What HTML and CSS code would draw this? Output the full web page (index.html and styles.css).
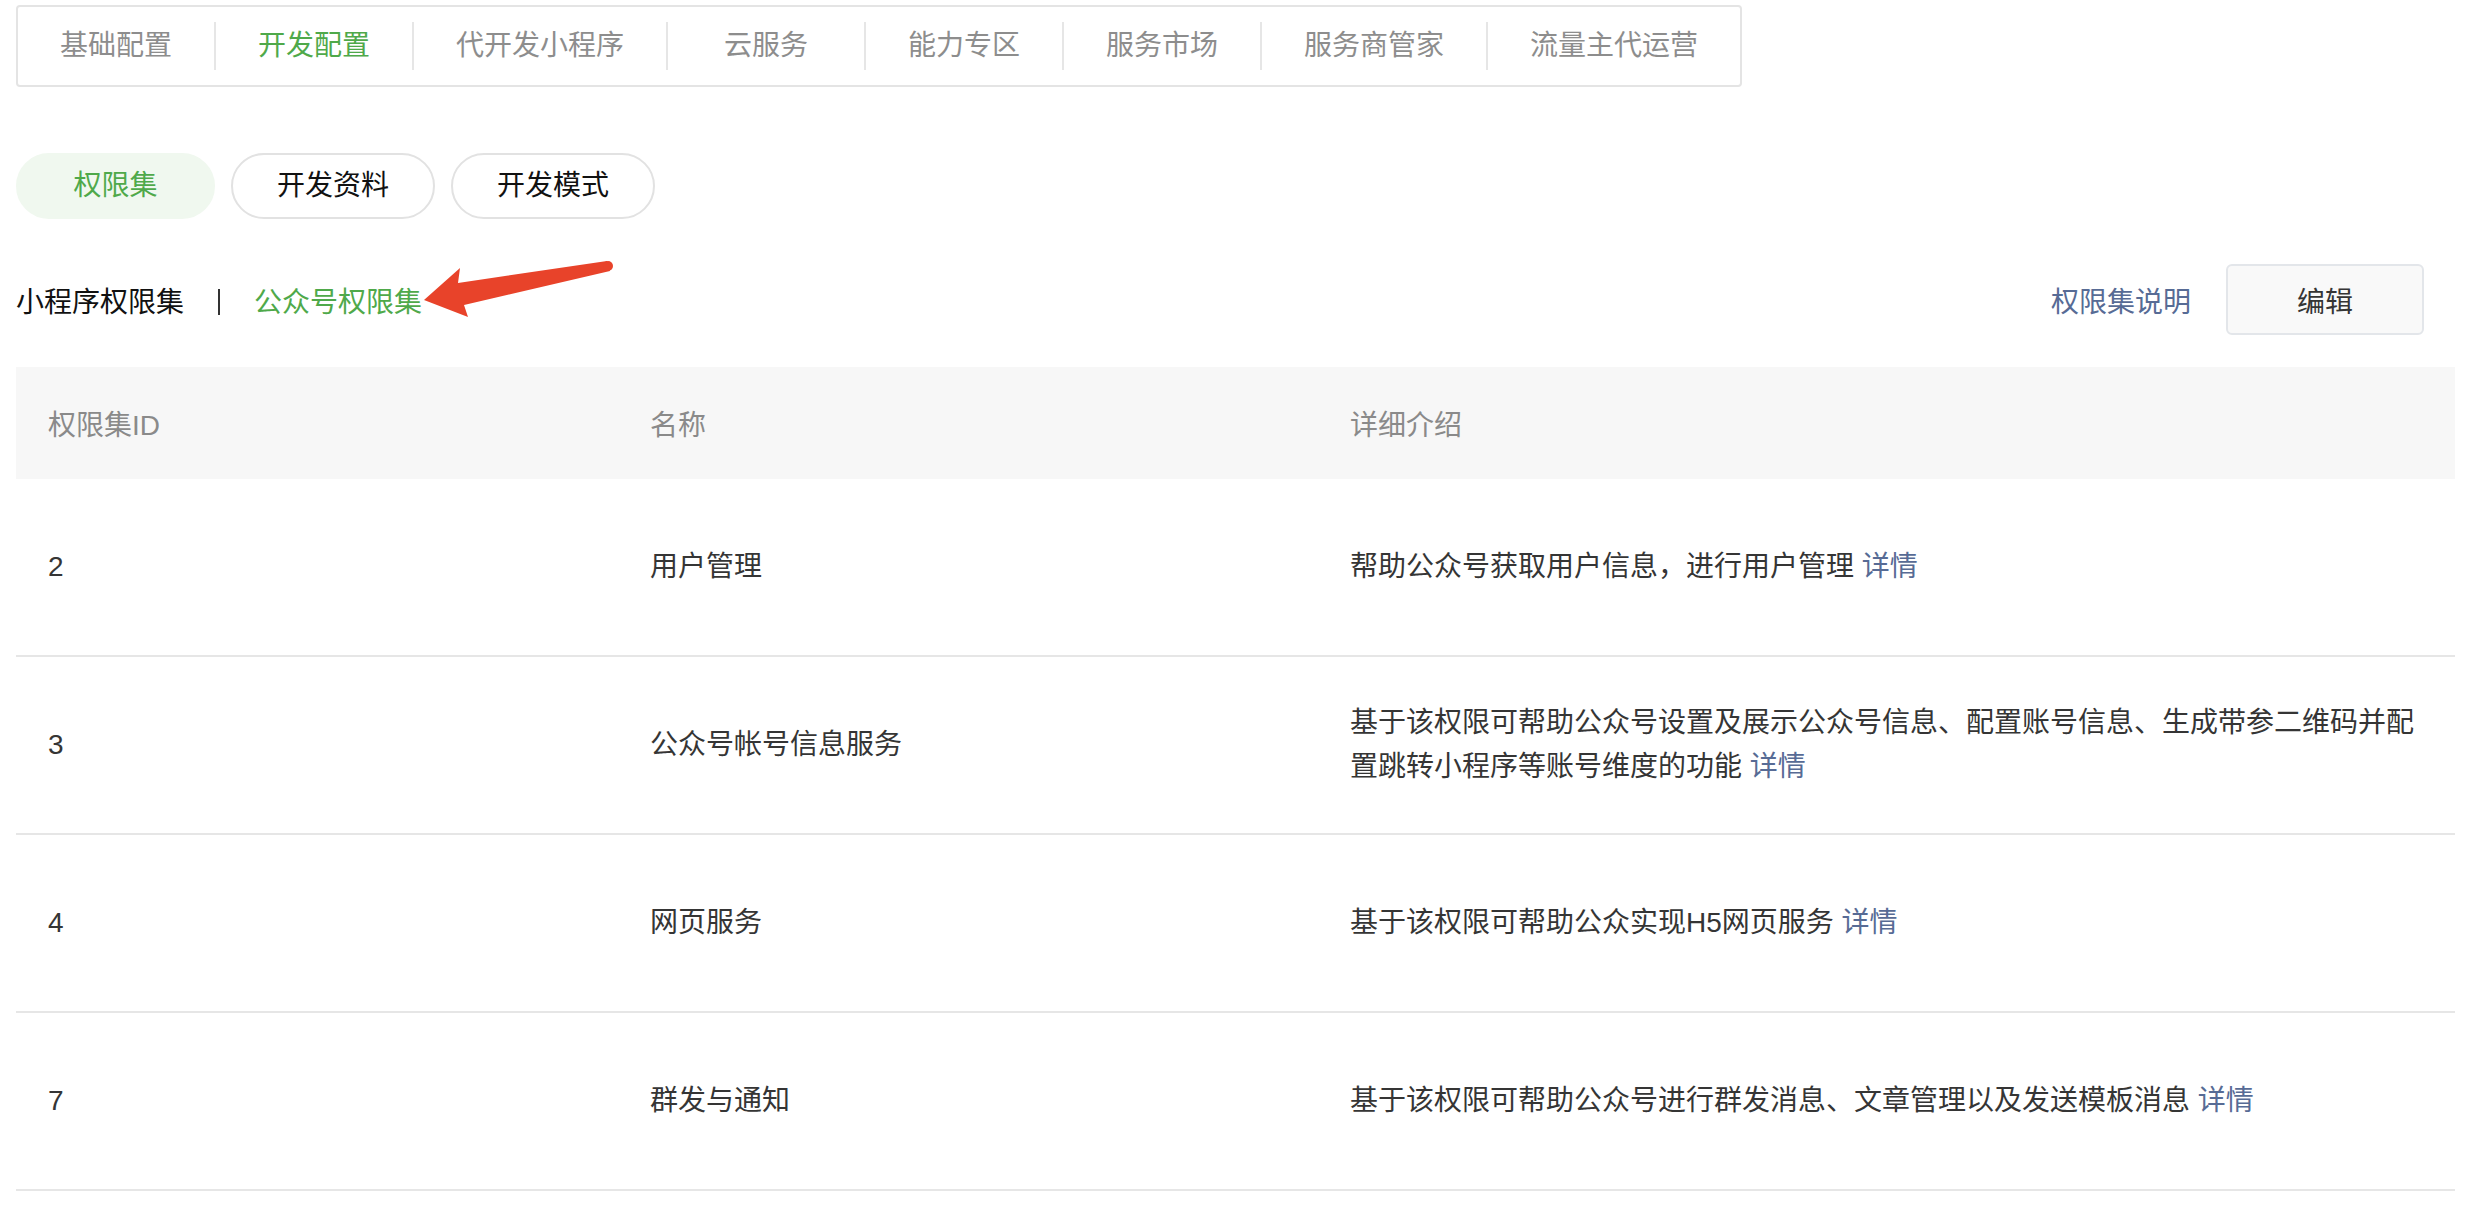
FILE: index.html
```html
<!DOCTYPE html>
<html lang="zh-CN">
<head>
    <meta charset="UTF-8">
    <meta name="viewport" content="width=device-width, initial-scale=1.0">
    <title>开发配置 - 权限集</title>
    <link rel="stylesheet" href="styles.css">
</head>
<body>
    <div class="page">
        <div class="top-nav">
            <a class="nav-item">基础配置</a>
            <a class="nav-item active">开发配置</a>
            <a class="nav-item">代开发小程序</a>
            <a class="nav-item">云服务</a>
            <a class="nav-item">能力专区</a>
            <a class="nav-item">服务市场</a>
            <a class="nav-item">服务商管家</a>
            <a class="nav-item">流量主代运营</a>
        </div>

        <div class="pills">
            <a class="pill active">权限集</a>
            <a class="pill">开发资料</a>
            <a class="pill">开发模式</a>
        </div>

        <div class="sub-bar">
            <div class="sub-tabs">
                <a class="sub-tab">小程序权限集</a>
                <span class="sub-sep"></span>
                <a class="sub-tab active">公众号权限集</a>
            </div>
            <div class="sub-actions">
                <a class="link">权限集说明</a>
                <button class="btn">编辑</button>
            </div>
        </div>

        <!-- annotation arrow pointing at the current tab -->
        <svg class="mark-arrow" width="230" height="80" viewBox="0 0 230 80">
            <polygon fill="#e8432a" points="24,50 60,18 58,33 207,11 210,21 64,55 68,67"/>
            <circle fill="#e8432a" cx="208" cy="16" r="5"/>
        </svg>

        <table class="auth-table">
            <colgroup>
                <col class="col-id">
                <col class="col-name">
                <col>
            </colgroup>
            <thead>
                <tr>
                    <th>权限集ID</th>
                    <th>名称</th>
                    <th>详细介绍</th>
                </tr>
            </thead>
            <tbody>
                <tr>
                    <td>2</td>
                    <td>用户管理</td>
                    <td>帮助公众号获取用户信息，进行用户管理 <a class="link">详情</a></td>
                </tr>
                <tr>
                    <td>3</td>
                    <td>公众号帐号信息服务</td>
                    <td>基于该权限可帮助公众号设置及展示公众号信息、配置账号信息、生成带参二维码并配置跳转小程序等账号维度的功能 <a class="link">详情</a></td>
                </tr>
                <tr>
                    <td>4</td>
                    <td>网页服务</td>
                    <td>基于该权限可帮助公众实现H5网页服务 <a class="link">详情</a></td>
                </tr>
                <tr>
                    <td>7</td>
                    <td>群发与通知</td>
                    <td>基于该权限可帮助公众号进行群发消息、文章管理以及发送模板消息 <a class="link">详情</a></td>
                </tr>
            </tbody>
        </table>
    </div>
</body>
</html>
```

FILE: styles.css
```css
body { margin: 0; background: #fff; color: #353535; font-family: "Liberation Sans", "Noto Sans CJK SC", sans-serif; font-size: 28px; }
a { cursor: pointer; }
.page { position: relative; padding: 5px 13px 0 16px; }

/* top navigation */
.top-nav { display: inline-flex; align-items: center; height: 78px; border: 2px solid #e4e4e4; border-radius: 4px; }
.nav-item { box-sizing: border-box; min-width: 198px; padding: 0 42px; line-height: 48px; text-align: center; color: #8d8d8d; }
.nav-item:first-child { min-width: 196px; }
.nav-item + .nav-item { border-left: 2px solid #e6e6e6; }
.nav-item.active { color: #4fa94a; }

/* pill tabs */
.pills { display: flex; gap: 16px; margin-top: 66px; }
.pill { min-width: 107px; height: 62px; line-height: 62px; padding: 0 44px; text-align: center; border: 2px solid #e2e2e2; border-radius: 33px; color: #111; }
.pill.active { background: #f0f8ef; border-color: #f0f8ef; color: #4fa94a; }

/* sub tabs + actions */
.sub-bar { display: flex; align-items: center; justify-content: space-between; margin-top: 45px; }
.sub-tabs { display: flex; align-items: center; }
.sub-tab { color: #111; }
.sub-tab.active { color: #4fa94a; }
.sub-sep { width: 2px; height: 26px; margin: 4px 34px 0 34px; background: #333; }
.sub-actions { display: flex; align-items: center; gap: 35px; margin-right: 31px; }
.link { color: #576b95; }
.btn { width: 198px; height: 71px; font: inherit; color: #353535; background: #f9f9f9; border: 2px solid #e3e6ea; border-radius: 6px; }

.mark-arrow { position: absolute; left: 400px; top: 250px; }

/* permission table */
.auth-table { width: 100%; margin-top: 32px; border-collapse: collapse; table-layout: fixed; }
.col-id { width: 602px; }
.col-name { width: 700px; }
.auth-table th { height: 112px; padding: 0 32px; text-align: left; font-weight: normal; color: #8a8a8a; background: #f7f7f7; }
.auth-table td { height: 176px; padding: 0 32px; line-height: 44px; vertical-align: middle; border-bottom: 2px solid #e6e6e6; }
```
